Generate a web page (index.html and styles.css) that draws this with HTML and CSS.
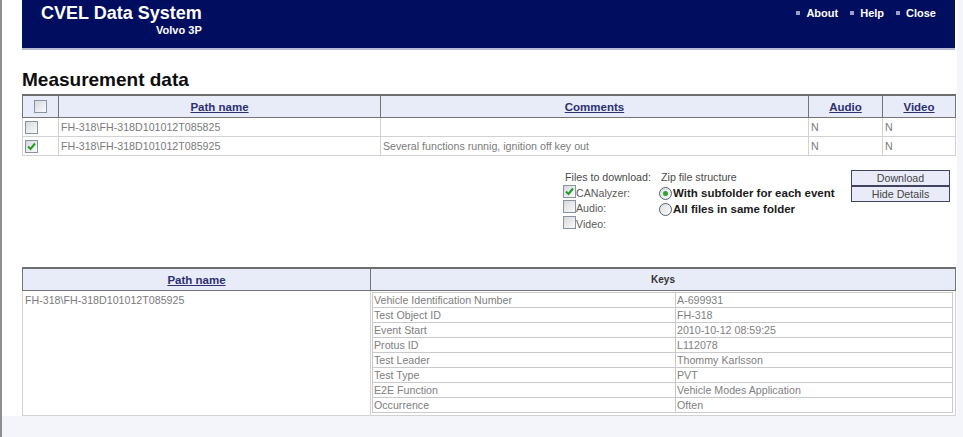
FILE: index.html
```html
<!DOCTYPE html>
<html>
<head>
<meta charset="utf-8">
<title>CVEL Data System</title>
<link rel="stylesheet" href="styles.css">
</head>
<body>
<div class="page">
  <header class="topbar">
    <div class="brand">
      <div class="brand-title">CVEL Data System</div>
      <div class="brand-sub">Volvo 3P</div>
    </div>
    <nav class="nav">
      <a class="nav-item" href="#">About</a>
      <a class="nav-item" href="#">Help</a>
      <a class="nav-item" href="#">Close</a>
    </nav>
  </header>

  <h1 class="title">Measurement data</h1>

  <table class="grid list">
    <colgroup>
      <col class="c-check"><col class="c-path"><col class="c-comm"><col class="c-audio"><col class="c-video">
    </colgroup>
    <thead>
      <tr>
        <th><span class="cb"></span></th>
        <th><a href="#">Path name</a></th>
        <th><a href="#">Comments</a></th>
        <th><a href="#">Audio</a></th>
        <th><a href="#">Video</a></th>
      </tr>
    </thead>
    <tbody>
      <tr>
        <td class="chk"><span class="cb"></span></td>
        <td>FH-318\FH-318D101012T085825</td>
        <td></td>
        <td>N</td>
        <td>N</td>
      </tr>
      <tr>
        <td class="chk"><span class="cb checked"><svg viewBox="0 0 11 11"><polyline points="2,5.5 4.5,8 9,2.5" fill="none" stroke="#21a021" stroke-width="2"/></svg></span></td>
        <td>FH-318\FH-318D101012T085925</td>
        <td>Several functions runnig, ignition off key out</td>
        <td>N</td>
        <td>N</td>
      </tr>
    </tbody>
  </table>

  <div class="options">
    <div class="opt-col files">
      <div class="opt-label">Files to download:</div>
      <div class="opt-line"><span class="cb checked"><svg viewBox="0 0 11 11"><polyline points="2,5.5 4.5,8 9,2.5" fill="none" stroke="#21a021" stroke-width="2"/></svg></span>CANalyzer:</div>
      <div class="opt-line"><span class="cb"></span>Audio:</div>
      <div class="opt-line"><span class="cb"></span>Video:</div>
    </div>
    <div class="opt-col zip">
      <div class="opt-label">Zip file structure</div>
      <div class="radio-line"><span class="rb checked"></span>With subfolder for each event</div>
      <div class="radio-line"><span class="rb"></span>All files in same folder</div>
    </div>
    <div class="buttons">
      <button class="btn" type="button">Download</button>
      <button class="btn" type="button">Hide Details</button>
    </div>
  </div>

  <table class="grid details">
    <colgroup><col class="c-dpath"><col class="c-keys"></colgroup>
    <thead>
      <tr>
        <th><a href="#">Path name</a></th>
        <th class="keys-head">Keys</th>
      </tr>
    </thead>
    <tbody>
      <tr>
        <td class="dpath">FH-318\FH-318D101012T085925</td>
        <td class="dkeys">
          <table class="kv">
            <colgroup><col class="c-k"><col class="c-v"></colgroup>
            <tr><td>Vehicle Identification Number</td><td>A-699931</td></tr>
            <tr><td>Test Object ID</td><td>FH-318</td></tr>
            <tr><td>Event Start</td><td>2010-10-12 08:59:25</td></tr>
            <tr><td>Protus ID</td><td>L112078</td></tr>
            <tr><td>Test Leader</td><td>Thommy Karlsson</td></tr>
            <tr><td>Test Type</td><td>PVT</td></tr>
            <tr><td>E2E Function</td><td>Vehicle Modes Application</td></tr>
            <tr><td>Occurrence</td><td>Often</td></tr>
          </table>
        </td>
      </tr>
    </tbody>
  </table>
</div>
</body>
</html>
```
FILE: styles.css
```css
html, body {
  margin: 0;
  padding: 0;
}
body {
  background: #f3f5fb;
  border-left: 2px solid #8e8e8e;
  min-height: 437px;
  box-sizing: border-box;
  font-family: "Liberation Sans", Arial, sans-serif;
  font-size: 10.67px;
  color: #7b7b7b;
}
.page {
  width: 955px;
  box-sizing: border-box;
  background: #fff;
  padding: 0 2px 0 20px;
  overflow: hidden;
}

/* header */
.topbar {
  box-sizing: border-box;
  height: 50px;
  background: #010d5e;
  border-bottom: 2px solid #b6bad2;
  display: flex;
  justify-content: space-between;
  padding: 0 19px;
}
.brand {
  display: flex;
  flex-direction: column;
  align-items: flex-end;
  padding-top: 3px;
  color: #fff;
  font-weight: bold;
}
.brand-title {
  font-size: 18px;
  line-height: 21px;
}
.brand-sub {
  font-size: 11px;
  line-height: 13px;
}
.nav {
  display: flex;
  align-items: flex-start;
  gap: 12px;
  padding-top: 7px;
}
.nav-item {
  display: flex;
  align-items: center;
  gap: 6px;
  color: #fff;
  font-size: 11px;
  font-weight: bold;
  line-height: 13px;
  text-decoration: none;
}
.nav-item::before {
  content: "";
  width: 4px;
  height: 4px;
  background: #9a9fc8;
  margin-top: -2px;
}

/* title */
.title {
  margin: 19px 0 3px;
  font-size: 19px;
  line-height: 22px;
  font-weight: bold;
  color: #0d0d0d;
}

/* grids */
.grid {
  width: 933px;
  border-collapse: collapse;
  table-layout: fixed;
}
.grid th {
  background: #e8ecf9;
  border: 1px solid #747474;
  border-top: 2px solid #6e6e6e;
  height: 21px;
  padding: 0;
  text-align: center;
  font-weight: bold;
}
.grid th a {
  color: #2e3070;
  font-size: 11.5px;
  text-decoration: underline;
}
.c-check { width: 36px; }
.c-path { width: 322px; }
.c-comm { width: 428px; }
.c-audio { width: 74px; }
.c-video { width: 73px; }

.list td {
  border: 1px solid #d2d2d2;
  height: 18px;
  padding: 0 2px;
  color: #7b7b7b;
  white-space: nowrap;
  overflow: hidden;
}
.list td.chk {
  padding: 0 2px;
}

/* checkbox & radio */
.cb {
  display: inline-block;
  box-sizing: border-box;
  width: 13px;
  height: 13px;
  border: 1px solid #8a93a0;
  background: linear-gradient(135deg, #d6d9de, #fbfbfb);
  vertical-align: middle;
}
.cb svg {
  display: block;
  width: 11px;
  height: 11px;
}
.rb {
  display: inline-block;
  box-sizing: border-box;
  width: 13px;
  height: 13px;
  border-radius: 50%;
  border: 1px solid #51626f;
  background: linear-gradient(135deg, #dcdfe3, #fbfbfb);
  vertical-align: -3px;
  margin-right: 1px;
  position: relative;
}
.rb.checked::after {
  content: "";
  position: absolute;
  left: 3px;
  top: 3px;
  width: 5px;
  height: 5px;
  border-radius: 50%;
  background: #2aa52a;
}

/* options */
.options {
  display: flex;
  width: 392px;
  box-sizing: border-box;
  margin: 14px 0 0 auto;
  padding-right: 5px;
}
.files { width: 96px; }
.zip { width: 192px; }
.buttons { width: 99px; }
.opt-label {
  line-height: 15.5px;
  padding-left: 2px;
  color: #4a4a4a;
  white-space: nowrap;
}
.opt-line {
  line-height: 15.5px;
  color: #5a5a5a;
  white-space: nowrap;
}
.opt-line .cb {
  vertical-align: top;
  margin-top: -1px;
}
.radio-line {
  font-size: 11.5px;
  font-weight: bold;
  line-height: 16px;
  color: #1a1a1a;
  white-space: nowrap;
  margin-top: -1px;
}
.radio-line + .radio-line {
  margin-top: 0;
}
.btn {
  display: block;
  box-sizing: border-box;
  width: 99px;
  height: 16px;
  margin: 0;
  padding: 0;
  border: 1px solid #41445f;
  background: #e9ecf8;
  font-family: "Liberation Sans", Arial, sans-serif;
  font-size: 10.67px;
  line-height: 14px;
  color: #444;
  text-align: center;
}

/* details */
.details {
  margin-top: 35px;
}
.c-dpath { width: 348px; }
.c-keys { width: 585px; }
.keys-head {
  font-size: 10px;
  color: #333;
}
.details td.dpath {
  border: 1px solid #d2d2d2;
  vertical-align: top;
  padding: 3px 2px;
  color: #7b7b7b;
  white-space: nowrap;
}
.details td.dkeys {
  border: 1px solid #d2d2d2;
  vertical-align: top;
  padding: 1px 2px 2px 1px;
}
.kv {
  width: 100%;
  border-collapse: collapse;
  table-layout: fixed;
}
.c-k { width: 303px; }
.kv td {
  border: 1px solid #c9c9c9;
  height: 14px;
  line-height: 13px;
  padding: 0 1px;
  color: #808080;
  white-space: nowrap;
}
```
